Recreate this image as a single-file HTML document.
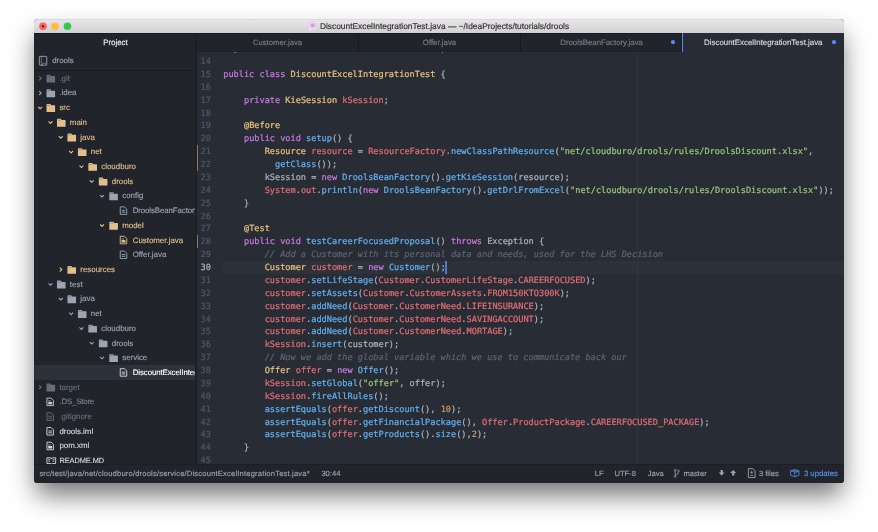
<!DOCTYPE html>
<html lang="en"><head><meta charset="utf-8"><title>DiscountExcelIntegrationTest.java</title>
<style>
html,body{margin:0;padding:0;background:#fff;}
body{width:878px;height:532px;position:relative;overflow:hidden;font-family:"Liberation Sans", sans-serif;text-rendering:geometricPrecision;}
#win{position:absolute;left:34.25px;top:19.0px;width:809.5px;height:463.95px;border-radius:4px 4px 3.5px 3.5px;
  box-shadow:0 14px 26px -2px rgba(0,0,0,.55);background:#282c34;}
#clip{position:absolute;left:0;top:0;width:100%;height:100%;border-radius:4px 4px 3.5px 3.5px;overflow:hidden;}
#abs{position:absolute;left:-34.25px;top:-19.0px;width:878px;height:532px;will-change:transform;}
#abs div,#abs svg{position:absolute;}
#abs div{height:14px;line-height:14px;white-space:pre;}
svg{display:block;overflow:visible;}
#abs .ctr{text-align:center;}
#abs #title{left:34.25px;top:19.0px;width:809.5px;height:14.00px;background:linear-gradient(#dcdadc 0,#dcdadc 1px,#e7e5e7 1px,#d2d0d2 100%);}
#abs .tl{top:22.4px;width:7.6px;height:7.6px;border-radius:50%;}
#abs #work{left:34.25px;top:33.0px;width:809.5px;height:431.00px;background:#181a1f;}
#abs #side{left:34.25px;top:33.6px;width:160.75px;height:430.40px;background:#21252b;}
#abs #sideb{left:195.0px;top:33.6px;width:1.60px;height:430.40px;background:#1c1f25;}
#abs #rootline{left:34.25px;top:70.0px;width:160.75px;height:0.8px;background:#181a1f;}
#abs #treeclip{left:34.25px;top:70.0px;width:161.45px;height:394.00px;overflow:hidden}
#abs #treein{left:-34.25px;top:-70.0px;width:878px;height:532px}
#abs #tabs{left:196.6px;top:33.6px;width:647.15px;height:18.40px;background:#21252b;}
#abs #tabline{left:196.6px;top:51px;width:486.00px;height:1px;background:#1d2026;}
#abs #tact{left:682.6px;top:33.0px;width:161.15px;height:19.00px;background:#282c34;}
#abs .tsep{top:33.6px;height:18.40px;width:0.9px;background:#181a1f;}
#abs .dot{width:3.7px;height:3.7px;border-radius:50%;background:#568af2;top:40.4px;}
#abs #ed{left:196.6px;top:52.0px;width:647.15px;height:412.00px;background:#282c34;overflow:hidden;}
#abs #edin{left:-196.6px;top:-52.0px;width:878px;height:532px;font-family:"DejaVu Sans Mono", "Liberation Mono", monospace;font-size:8.6px;color:#abb2bf;-webkit-text-stroke:.22px currentColor;}
#abs .ln{left:200.55px;height:12.875px;line-height:12.875px;color:#4f5666;}
#abs .ln.cur{color:#abb2bf;}
#abs .cl{left:223.25px;height:12.875px;line-height:12.875px;}
.k{color:#c678dd}.c{color:#e5c07b}.v{color:#e06c75}.f{color:#61afef}.s{color:#98c379}.n{color:#d19a66}.m{color:#5c6370;font-style:italic}
#abs #curline{left:223.1px;width:620.65px;top:260.9px;height:13px;background:#2c313a;}
#abs #cursor{left:444.9px;top:260.9px;width:2.3px;height:13px;background:#4b79da;}
#abs #guide{left:637.2px;top:0;width:0.9px;height:532px;background:#31353e;}
#abs .gm{left:195.8px;width:2.1px;background:#8b7959;}
#abs #status{left:34.25px;top:464.0px;width:809.5px;height:18.95px;background:#21252b;}
#abs #stline{left:34.25px;top:464.0px;width:809.5px;height:1px;background:#1b1e23;}
</style></head><body>
<div id="win"><div id="clip"><div id="abs">
<div id="title"></div>
<svg style="left:34px;top:19px" width="40" height="14" viewBox="0 0 40 14"><circle cx="8.95" cy="7.25" r="3.8" fill="#fc605b"/><circle cx="21" cy="7.25" r="3.8" fill="#fdbc40"/><circle cx="33.45" cy="7.25" r="3.8" fill="#34c84a"/><circle cx="8.95" cy="7.25" r="1.05" fill="#4d0000"/></svg>
<div id="ticon" style="left:309.2px;top:21.8px;width:6.2px;height:9px;border-radius:.8px;background:#e9e8ea;box-shadow:0 0 0 .4px #cfcdd1"></div>
<div style="left:310.1px;top:23px;width:4.6px;height:4.8px;border-radius:50%;background:#e0a2ea"></div>
<div style="left:311.6px;top:24.6px;width:1.6px;height:1.6px;border-radius:50%;background:#b07ab8"></div>
<div style="left:310.6px;top:29.2px;width:3.6px;height:.6px;background:#cfcdd1"></div>
<div style="left:319.9px;top:19px;font-size:8.4px;color:#303030;-webkit-text-stroke:.15px #303030;">DiscountExcelIntegrationTest.java — ~/IdeaProjects/tutorials/drools</div>
<div id="work"></div>
<div id="side"></div>
<div style="left:103.2px;top:36px;font-size:7.9px;color:#d7dae0;-webkit-text-stroke:.3px #d7dae0;">Project</div>
<svg style="left:38px;top:55px" width="11" height="13" viewBox="-0.900 -0.900 11.000 13.000"><path d="M0.45 8.7 V1 Q0.45 0.45 1 0.45 H7.3 Q7.85 0.45 7.85 1 V8.7 Q7.85 9.25 7.3 9.25 H4.5 M1.7 9.25 H1 Q0.45 9.25 0.45 8.7" fill="none" stroke="#9da5b4" stroke-width="0.9"/><path d="M2.5 0.45 V7.4 H7.85" fill="none" stroke="#9da5b4" stroke-width="0.7" opacity=".75"/><path d="M1.9 8.3 V10.2 L3 9.5 L4.1 10.2 V8.3 Z" fill="#9da5b4"/></svg>
<div style="left:52.2px;top:54px;font-size:7.9px;color:#9da5b4;-webkit-text-stroke:.12px #9da5b4;">drools</div>
<div id="rootline"></div>
<div id="treeclip"><div id="treein">
<svg style="left:38px;top:75px" width="5" height="7" viewBox="-0.650 -0.950 5.000 7.000"><path d="M0.55 0.45 L2.5 2.4 L0.55 4.35" fill="none" stroke="#676e7b" stroke-width="1.1"/></svg>
<svg style="left:46px;top:74px" width="11" height="10" viewBox="-0.500 -0.650 11.000 10.000"><path d="M0 0.6 Q0 0 0.6 0 L3.7 0 Q4.2 0 4.3 0.5 L4.5 1.3 L8.1 1.3 Q8.6 1.3 8.6 1.8 L8.6 7.4 Q8.6 7.9 8.1 7.9 L0.5 7.9 Q0 7.9 0 7.4 Z" fill="#676e7b"/><path d="M0.7 1.45 H3.7" stroke="#21252b" stroke-width="0.5" opacity=".6"/></svg>
<div style="left:59.4px;top:72px;font-size:7.9px;color:#676e7b;-webkit-text-stroke:.12px #676e7b;">.git</div>
<svg style="left:38px;top:90px" width="5" height="7" viewBox="-0.650 -0.660 5.000 7.000"><path d="M0.55 0.45 L2.5 2.4 L0.55 4.35" fill="none" stroke="#9da5b4" stroke-width="1.1"/></svg>
<svg style="left:46px;top:89px" width="11" height="10" viewBox="-0.500 -0.360 11.000 10.000"><path d="M0 0.6 Q0 0 0.6 0 L3.7 0 Q4.2 0 4.3 0.5 L4.5 1.3 L8.1 1.3 Q8.6 1.3 8.6 1.8 L8.6 7.4 Q8.6 7.9 8.1 7.9 L0.5 7.9 Q0 7.9 0 7.4 Z" fill="#9da5b4"/><path d="M0.7 1.45 H3.7" stroke="#21252b" stroke-width="0.5" opacity=".6"/></svg>
<div style="left:59.4px;top:86px;font-size:7.9px;color:#9da5b4;-webkit-text-stroke:.12px #9da5b4;">.idea</div>
<svg style="left:37px;top:106px" width="7" height="5" viewBox="-0.800 -0.220 7.000 5.000"><path d="M0.45 0.55 L2.4 2.5 L4.35 0.55" fill="none" stroke="#e2c08d" stroke-width="1.1"/></svg>
<svg style="left:46px;top:104px" width="11" height="9" viewBox="-0.500 -0.070 11.000 9.000"><path d="M0 0.6 Q0 0 0.6 0 L3.7 0 Q4.2 0 4.3 0.5 L4.5 1.3 L8.1 1.3 Q8.6 1.3 8.6 1.8 L8.6 7.4 Q8.6 7.9 8.1 7.9 L0.5 7.9 Q0 7.9 0 7.4 Z" fill="#e2c08d"/><path d="M0.7 1.45 H3.7" stroke="#21252b" stroke-width="0.5" opacity=".6"/></svg>
<div style="left:59.4px;top:101px;font-size:7.9px;color:#e2c08d;-webkit-text-stroke:.12px #e2c08d;">src</div>
<svg style="left:48px;top:120px" width="6" height="6" viewBox="-0.100 -0.930 6.000 6.000"><path d="M0.45 0.55 L2.4 2.5 L4.35 0.55" fill="none" stroke="#e2c08d" stroke-width="1.1"/></svg>
<svg style="left:56px;top:118px" width="11" height="10" viewBox="-0.970 -0.780 11.000 10.000"><path d="M0 0.6 Q0 0 0.6 0 L3.7 0 Q4.2 0 4.3 0.5 L4.5 1.3 L8.1 1.3 Q8.6 1.3 8.6 1.8 L8.6 7.4 Q8.6 7.9 8.1 7.9 L0.5 7.9 Q0 7.9 0 7.4 Z" fill="#e2c08d"/><path d="M0.7 1.45 H3.7" stroke="#21252b" stroke-width="0.5" opacity=".6"/></svg>
<div style="left:69.87px;top:116px;font-size:7.9px;color:#e2c08d;-webkit-text-stroke:.12px #e2c08d;">main</div>
<svg style="left:58px;top:135px" width="7" height="5" viewBox="-0.400 -0.640 7.000 5.000"><path d="M0.45 0.55 L2.4 2.5 L4.35 0.55" fill="none" stroke="#e2c08d" stroke-width="1.1"/></svg>
<svg style="left:67px;top:133px" width="11" height="10" viewBox="-0.440 -0.490 11.000 10.000"><path d="M0 0.6 Q0 0 0.6 0 L3.7 0 Q4.2 0 4.3 0.5 L4.5 1.3 L8.1 1.3 Q8.6 1.3 8.6 1.8 L8.6 7.4 Q8.6 7.9 8.1 7.9 L0.5 7.9 Q0 7.9 0 7.4 Z" fill="#e2c08d"/><path d="M0.7 1.45 H3.7" stroke="#21252b" stroke-width="0.5" opacity=".6"/></svg>
<div style="left:80.34px;top:131px;font-size:7.9px;color:#e2c08d;-webkit-text-stroke:.12px #e2c08d;">java</div>
<svg style="left:68px;top:150px" width="7" height="5" viewBox="-0.700 -0.350 7.000 5.000"><path d="M0.45 0.55 L2.4 2.5 L4.35 0.55" fill="none" stroke="#e2c08d" stroke-width="1.1"/></svg>
<svg style="left:77px;top:148px" width="11" height="10" viewBox="-0.910 -0.200 11.000 10.000"><path d="M0 0.6 Q0 0 0.6 0 L3.7 0 Q4.2 0 4.3 0.5 L4.5 1.3 L8.1 1.3 Q8.6 1.3 8.6 1.8 L8.6 7.4 Q8.6 7.9 8.1 7.9 L0.5 7.9 Q0 7.9 0 7.4 Z" fill="#e2c08d"/><path d="M0.7 1.45 H3.7" stroke="#21252b" stroke-width="0.5" opacity=".6"/></svg>
<div style="left:90.81px;top:145px;font-size:7.9px;color:#e2c08d;-webkit-text-stroke:.12px #e2c08d;">net</div>
<svg style="left:79px;top:165px" width="6" height="5" viewBox="0.000 -0.060 6.000 5.000"><path d="M0.45 0.55 L2.4 2.5 L4.35 0.55" fill="none" stroke="#e2c08d" stroke-width="1.1"/></svg>
<svg style="left:88px;top:162px" width="10" height="10" viewBox="-0.380 -0.910 10.000 10.000"><path d="M0 0.6 Q0 0 0.6 0 L3.7 0 Q4.2 0 4.3 0.5 L4.5 1.3 L8.1 1.3 Q8.6 1.3 8.6 1.8 L8.6 7.4 Q8.6 7.9 8.1 7.9 L0.5 7.9 Q0 7.9 0 7.4 Z" fill="#e2c08d"/><path d="M0.7 1.45 H3.7" stroke="#21252b" stroke-width="0.5" opacity=".6"/></svg>
<div style="left:101.28px;top:160px;font-size:7.9px;color:#e2c08d;-webkit-text-stroke:.12px #e2c08d;">cloudburo</div>
<svg style="left:89px;top:179px" width="7" height="5" viewBox="-0.300 -0.770 7.000 5.000"><path d="M0.45 0.55 L2.4 2.5 L4.35 0.55" fill="none" stroke="#e2c08d" stroke-width="1.1"/></svg>
<svg style="left:98px;top:177px" width="11" height="10" viewBox="-0.850 -0.620 11.000 10.000"><path d="M0 0.6 Q0 0 0.6 0 L3.7 0 Q4.2 0 4.3 0.5 L4.5 1.3 L8.1 1.3 Q8.6 1.3 8.6 1.8 L8.6 7.4 Q8.6 7.9 8.1 7.9 L0.5 7.9 Q0 7.9 0 7.4 Z" fill="#e2c08d"/><path d="M0.7 1.45 H3.7" stroke="#21252b" stroke-width="0.5" opacity=".6"/></svg>
<div style="left:111.75px;top:175px;font-size:7.9px;color:#e2c08d;-webkit-text-stroke:.12px #e2c08d;">drools</div>
<svg style="left:99px;top:194px" width="7" height="5" viewBox="-0.600 -0.480 7.000 5.000"><path d="M0.45 0.55 L2.4 2.5 L4.35 0.55" fill="none" stroke="#9da5b4" stroke-width="1.1"/></svg>
<svg style="left:109px;top:192px" width="10" height="10" viewBox="-0.320 -0.330 10.000 10.000"><path d="M0 0.6 Q0 0 0.6 0 L3.7 0 Q4.2 0 4.3 0.5 L4.5 1.3 L8.1 1.3 Q8.6 1.3 8.6 1.8 L8.6 7.4 Q8.6 7.9 8.1 7.9 L0.5 7.9 Q0 7.9 0 7.4 Z" fill="#9da5b4"/><path d="M0.7 1.45 H3.7" stroke="#21252b" stroke-width="0.5" opacity=".6"/></svg>
<div style="left:122.22px;top:189px;font-size:7.9px;color:#9da5b4;-webkit-text-stroke:.12px #9da5b4;">config</div>
<svg style="left:119px;top:206px" width="10" height="10" viewBox="-0.790 -0.440 10.000 10.000"><path d="M0.45 0.45 L4.7 0.45 L6.95 2.7 L6.95 7.95 L0.45 7.95 Z" fill="none" stroke="#9da5b4" stroke-width="0.9" stroke-linejoin="round"/><path d="M1.9 3.9 H5.5 M1.9 5.7 H5.5" stroke="#9da5b4" stroke-width="0.9"/></svg>
<div style="left:132.69px;top:204px;font-size:7.9px;color:#9da5b4;letter-spacing:-0.11px;-webkit-text-stroke:.12px #9da5b4;">DroolsBeanFactory.java</div>
<svg style="left:99px;top:223px" width="7" height="6" viewBox="-0.600 -0.900 7.000 6.000"><path d="M0.45 0.55 L2.4 2.5 L4.35 0.55" fill="none" stroke="#e2c08d" stroke-width="1.1"/></svg>
<svg style="left:109px;top:221px" width="10" height="10" viewBox="-0.320 -0.750 10.000 10.000"><path d="M0 0.6 Q0 0 0.6 0 L3.7 0 Q4.2 0 4.3 0.5 L4.5 1.3 L8.1 1.3 Q8.6 1.3 8.6 1.8 L8.6 7.4 Q8.6 7.9 8.1 7.9 L0.5 7.9 Q0 7.9 0 7.4 Z" fill="#e2c08d"/><path d="M0.7 1.45 H3.7" stroke="#21252b" stroke-width="0.5" opacity=".6"/></svg>
<div style="left:122.22px;top:219px;font-size:7.9px;color:#e2c08d;-webkit-text-stroke:.12px #e2c08d;">model</div>
<svg style="left:119px;top:235px" width="10" height="11" viewBox="-0.790 -0.860 10.000 11.000"><path d="M0.45 0.45 L4.7 0.45 L6.95 2.7 L6.95 7.95 L0.45 7.95 Z" fill="none" stroke="#e2c08d" stroke-width="0.9" stroke-linejoin="round"/><path d="M1.7 4.2 H5.7 V6.7 H1.7 Z" fill="#e2c08d"/><path d="M1.8 3.1 H4.2" stroke="#e2c08d" stroke-width="0.7"/></svg>
<div style="left:132.69px;top:234px;font-size:7.9px;color:#e2c08d;-webkit-text-stroke:.12px #e2c08d;">Customer.java</div>
<svg style="left:119px;top:250px" width="10" height="10" viewBox="-0.790 -0.570 10.000 10.000"><path d="M0.45 0.45 L4.7 0.45 L6.95 2.7 L6.95 7.95 L0.45 7.95 Z" fill="none" stroke="#9da5b4" stroke-width="0.9" stroke-linejoin="round"/><path d="M1.9 3.9 H5.5 M1.9 5.7 H5.5" stroke="#9da5b4" stroke-width="0.9"/></svg>
<div style="left:132.69px;top:248px;font-size:7.9px;color:#9da5b4;-webkit-text-stroke:.12px #9da5b4;">Offer.java</div>
<svg style="left:59px;top:267px" width="5" height="6" viewBox="-0.250 -0.180 5.000 6.000"><path d="M0.55 0.45 L2.5 2.4 L0.55 4.35" fill="none" stroke="#e2c08d" stroke-width="1.1"/></svg>
<svg style="left:67px;top:265px" width="11" height="10" viewBox="-0.440 -0.880 11.000 10.000"><path d="M0 0.6 Q0 0 0.6 0 L3.7 0 Q4.2 0 4.3 0.5 L4.5 1.3 L8.1 1.3 Q8.6 1.3 8.6 1.8 L8.6 7.4 Q8.6 7.9 8.1 7.9 L0.5 7.9 Q0 7.9 0 7.4 Z" fill="#e2c08d"/><path d="M0.7 1.45 H3.7" stroke="#21252b" stroke-width="0.5" opacity=".6"/></svg>
<div style="left:80.34px;top:263px;font-size:7.9px;color:#e2c08d;-webkit-text-stroke:.12px #e2c08d;">resources</div>
<svg style="left:48px;top:282px" width="6" height="5" viewBox="-0.100 -0.740 6.000 5.000"><path d="M0.45 0.55 L2.4 2.5 L4.35 0.55" fill="none" stroke="#9da5b4" stroke-width="1.1"/></svg>
<svg style="left:56px;top:280px" width="11" height="10" viewBox="-0.970 -0.590 11.000 10.000"><path d="M0 0.6 Q0 0 0.6 0 L3.7 0 Q4.2 0 4.3 0.5 L4.5 1.3 L8.1 1.3 Q8.6 1.3 8.6 1.8 L8.6 7.4 Q8.6 7.9 8.1 7.9 L0.5 7.9 Q0 7.9 0 7.4 Z" fill="#9da5b4"/><path d="M0.7 1.45 H3.7" stroke="#21252b" stroke-width="0.5" opacity=".6"/></svg>
<div style="left:69.87px;top:278px;font-size:7.9px;color:#9da5b4;-webkit-text-stroke:.12px #9da5b4;">test</div>
<svg style="left:58px;top:297px" width="7" height="5" viewBox="-0.400 -0.450 7.000 5.000"><path d="M0.45 0.55 L2.4 2.5 L4.35 0.55" fill="none" stroke="#9da5b4" stroke-width="1.1"/></svg>
<svg style="left:67px;top:295px" width="11" height="10" viewBox="-0.440 -0.300 11.000 10.000"><path d="M0 0.6 Q0 0 0.6 0 L3.7 0 Q4.2 0 4.3 0.5 L4.5 1.3 L8.1 1.3 Q8.6 1.3 8.6 1.8 L8.6 7.4 Q8.6 7.9 8.1 7.9 L0.5 7.9 Q0 7.9 0 7.4 Z" fill="#9da5b4"/><path d="M0.7 1.45 H3.7" stroke="#21252b" stroke-width="0.5" opacity=".6"/></svg>
<div style="left:80.34px;top:292px;font-size:7.9px;color:#9da5b4;-webkit-text-stroke:.12px #9da5b4;">java</div>
<svg style="left:68px;top:312px" width="7" height="5" viewBox="-0.700 -0.160 7.000 5.000"><path d="M0.45 0.55 L2.4 2.5 L4.35 0.55" fill="none" stroke="#9da5b4" stroke-width="1.1"/></svg>
<svg style="left:77px;top:310px" width="11" height="9" viewBox="-0.910 -0.010 11.000 9.000"><path d="M0 0.6 Q0 0 0.6 0 L3.7 0 Q4.2 0 4.3 0.5 L4.5 1.3 L8.1 1.3 Q8.6 1.3 8.6 1.8 L8.6 7.4 Q8.6 7.9 8.1 7.9 L0.5 7.9 Q0 7.9 0 7.4 Z" fill="#9da5b4"/><path d="M0.7 1.45 H3.7" stroke="#21252b" stroke-width="0.5" opacity=".6"/></svg>
<div style="left:90.81px;top:307px;font-size:7.9px;color:#9da5b4;-webkit-text-stroke:.12px #9da5b4;">net</div>
<svg style="left:79px;top:326px" width="6" height="5" viewBox="0.000 -0.870 6.000 5.000"><path d="M0.45 0.55 L2.4 2.5 L4.35 0.55" fill="none" stroke="#9da5b4" stroke-width="1.1"/></svg>
<svg style="left:88px;top:324px" width="10" height="10" viewBox="-0.380 -0.720 10.000 10.000"><path d="M0 0.6 Q0 0 0.6 0 L3.7 0 Q4.2 0 4.3 0.5 L4.5 1.3 L8.1 1.3 Q8.6 1.3 8.6 1.8 L8.6 7.4 Q8.6 7.9 8.1 7.9 L0.5 7.9 Q0 7.9 0 7.4 Z" fill="#9da5b4"/><path d="M0.7 1.45 H3.7" stroke="#21252b" stroke-width="0.5" opacity=".6"/></svg>
<div style="left:101.28px;top:322px;font-size:7.9px;color:#9da5b4;-webkit-text-stroke:.12px #9da5b4;">cloudburo</div>
<svg style="left:89px;top:341px" width="7" height="5" viewBox="-0.300 -0.580 7.000 5.000"><path d="M0.45 0.55 L2.4 2.5 L4.35 0.55" fill="none" stroke="#9da5b4" stroke-width="1.1"/></svg>
<svg style="left:98px;top:339px" width="11" height="10" viewBox="-0.850 -0.430 11.000 10.000"><path d="M0 0.6 Q0 0 0.6 0 L3.7 0 Q4.2 0 4.3 0.5 L4.5 1.3 L8.1 1.3 Q8.6 1.3 8.6 1.8 L8.6 7.4 Q8.6 7.9 8.1 7.9 L0.5 7.9 Q0 7.9 0 7.4 Z" fill="#9da5b4"/><path d="M0.7 1.45 H3.7" stroke="#21252b" stroke-width="0.5" opacity=".6"/></svg>
<div style="left:111.75px;top:337px;font-size:7.9px;color:#9da5b4;-webkit-text-stroke:.12px #9da5b4;">drools</div>
<svg style="left:99px;top:356px" width="7" height="5" viewBox="-0.600 -0.290 7.000 5.000"><path d="M0.45 0.55 L2.4 2.5 L4.35 0.55" fill="none" stroke="#9da5b4" stroke-width="1.1"/></svg>
<svg style="left:109px;top:354px" width="10" height="10" viewBox="-0.320 -0.140 10.000 10.000"><path d="M0 0.6 Q0 0 0.6 0 L3.7 0 Q4.2 0 4.3 0.5 L4.5 1.3 L8.1 1.3 Q8.6 1.3 8.6 1.8 L8.6 7.4 Q8.6 7.9 8.1 7.9 L0.5 7.9 Q0 7.9 0 7.4 Z" fill="#9da5b4"/><path d="M0.7 1.45 H3.7" stroke="#21252b" stroke-width="0.5" opacity=".6"/></svg>
<div style="left:122.22px;top:351px;font-size:7.9px;color:#9da5b4;-webkit-text-stroke:.12px #9da5b4;">service</div>
<div style="left:34.25px;top:364.80px;width:162.35px;height:14.91px;background:#2c313a"></div>
<svg style="left:119px;top:368px" width="10" height="10" viewBox="-0.790 -0.250 10.000 10.000"><path d="M0.45 0.45 L4.7 0.45 L6.95 2.7 L6.95 7.95 L0.45 7.95 Z" fill="none" stroke="#d7dae0" stroke-width="0.9" stroke-linejoin="round"/><path d="M1.9 3.9 H5.5 M1.9 5.7 H5.5" stroke="#d7dae0" stroke-width="0.9"/></svg>
<div style="left:132.69px;top:366px;font-size:7.9px;color:#ffffff;letter-spacing:-0.1px;-webkit-text-stroke:.12px #ffffff;">DiscountExcelIntegrationTest.java</div>
<svg style="left:38px;top:384px" width="5" height="7" viewBox="-0.650 -0.860 5.000 7.000"><path d="M0.55 0.45 L2.5 2.4 L0.55 4.35" fill="none" stroke="#676e7b" stroke-width="1.1"/></svg>
<svg style="left:46px;top:383px" width="11" height="10" viewBox="-0.500 -0.560 11.000 10.000"><path d="M0 0.6 Q0 0 0.6 0 L3.7 0 Q4.2 0 4.3 0.5 L4.5 1.3 L8.1 1.3 Q8.6 1.3 8.6 1.8 L8.6 7.4 Q8.6 7.9 8.1 7.9 L0.5 7.9 Q0 7.9 0 7.4 Z" fill="#676e7b"/><path d="M0.7 1.45 H3.7" stroke="#21252b" stroke-width="0.5" opacity=".6"/></svg>
<div style="left:59.4px;top:381px;font-size:7.9px;color:#676e7b;-webkit-text-stroke:.12px #676e7b;">target</div>
<svg style="left:46px;top:397px" width="9" height="11" viewBox="-0.500 -0.670 9.000 11.000"><path d="M0.45 0.45 L4.7 0.45 L6.95 2.7 L6.95 7.95 L0.45 7.95 Z" fill="none" stroke="#c5c9d1" stroke-width="0.9" stroke-linejoin="round"/><path d="M1.7 4.2 H5.7 V6.7 H1.7 Z" fill="#c5c9d1"/><path d="M1.8 3.1 H4.2" stroke="#c5c9d1" stroke-width="0.7"/></svg>
<div style="left:59.4px;top:395px;font-size:7.9px;color:#7a818e;letter-spacing:-0.2px;-webkit-text-stroke:.12px #7a818e;">.DS_Store</div>
<svg style="left:46px;top:412px" width="9" height="10" viewBox="-0.500 -0.380 9.000 10.000"><path d="M0.45 0.45 L4.7 0.45 L6.95 2.7 L6.95 7.95 L0.45 7.95 Z" fill="none" stroke="#676e7b" stroke-width="0.9" stroke-linejoin="round"/><path d="M1.9 3.9 H5.5 M1.9 5.7 H5.5" stroke="#676e7b" stroke-width="0.9"/></svg>
<div style="left:59.4px;top:410px;font-size:7.9px;color:#676e7b;-webkit-text-stroke:.12px #676e7b;">.gitignore</div>
<svg style="left:46px;top:427px" width="9" height="10" viewBox="-0.500 -0.090 9.000 10.000"><path d="M0.45 0.45 L4.7 0.45 L6.95 2.7 L6.95 7.95 L0.45 7.95 Z" fill="none" stroke="#d7dae0" stroke-width="0.9" stroke-linejoin="round"/><path d="M1.9 3.9 H5.5 M1.9 5.7 H5.5" stroke="#d7dae0" stroke-width="0.9"/></svg>
<div style="left:59.4px;top:425px;font-size:7.9px;color:#d7dae0;-webkit-text-stroke:.12px #d7dae0;">drools.iml</div>
<svg style="left:46px;top:441px" width="9" height="11" viewBox="-0.500 -0.800 9.000 11.000"><path d="M0.45 0.45 L4.7 0.45 L6.95 2.7 L6.95 7.95 L0.45 7.95 Z" fill="none" stroke="#d7dae0" stroke-width="0.9" stroke-linejoin="round"/><path d="M1.7 4.2 H5.7 V6.7 H1.7 Z" fill="#d7dae0"/><path d="M1.8 3.1 H4.2" stroke="#d7dae0" stroke-width="0.7"/></svg>
<div style="left:59.4px;top:439px;font-size:7.9px;color:#d7dae0;-webkit-text-stroke:.12px #d7dae0;">pom.xml</div>
<svg style="left:46px;top:457px" width="12" height="9" viewBox="-0.500 -0.210 12.000 9.000"><path d="M0.45 0.6 H3.6 Q4.8 0.6 4.8 1.6 Q4.8 0.6 6 0.6 H9.15 V6.3 H6 Q4.8 6.3 4.8 7.2 Q4.8 6.3 3.6 6.3 H0.45 Z" fill="none" stroke="#d7dae0" stroke-width="0.9"/><path d="M1.7 2.4 H3.5 M1.7 4 H3.5 M6.1 2.4 H7.9 M6.1 4 H7.9" stroke="#d7dae0" stroke-width="0.8"/></svg>
<div style="left:59.4px;top:454px;font-size:7.4px;color:#d7dae0;letter-spacing:-0.05px;-webkit-text-stroke:.12px #d7dae0;">README.MD</div>
</div></div>
<div id="sideb"></div>
<div id="tabs"></div>
<div id="tabline"></div>
<div id="tact"></div>
<div class="ctr" style="left:177.50px;width:200px;top:36px;font-size:7.68px;color:#757c89;-webkit-text-stroke:.15px #757c89">Customer.java</div>
<div class="ctr" style="left:339.50px;width:200px;top:36px;font-size:7.85px;color:#757c89;-webkit-text-stroke:.15px #757c89">Offer.java</div>
<div class="ctr" style="left:501.60px;width:200px;top:36px;font-size:7.8px;color:#757c89;-webkit-text-stroke:.15px #757c89">DroolsBeanFactory.java</div>
<div class="ctr" style="left:663.30px;width:200px;top:36px;font-size:7.9px;color:#d7dae0;-webkit-text-stroke:.15px #d7dae0">DiscountExcelIntegrationTest.java</div>
<div class="tsep" style="left:357.95px"></div>
<div class="tsep" style="left:520.15px"></div>
<div class="tsep" style="left:680.8px;width:1.1px"></div>
<div class="tsep" style="left:681.9px;width:1.1px;top:33.0px;height:18.70px;background:#528bff"></div>
<div class="dot" style="left:670.95px"></div>
<div class="dot" style="left:832.35px"></div>
<div id="ed"><div id="edin">
<div id="curline"></div>
<div id="guide"></div>
<div class="gm" style="top:145.03px;height:25.75px"></div>
<div class="gm" style="top:235.15px;height:12.88px"></div>
<div class="ln" style="top:56px">14</div>
<div class="ln" style="top:69px">15</div>
<div class="cl" style="top:69px"><span class="k">public class</span> <span class="c">DiscountExcelIntegrationTest</span> {</div>
<div class="ln" style="top:82px">16</div>
<div class="ln" style="top:95px">17</div>
<div class="cl" style="top:95px">    <span class="k">private</span> <span class="c">KieSession</span> <span class="v">kSession</span>;</div>
<div class="ln" style="top:108px">18</div>
<div class="ln" style="top:120px">19</div>
<div class="cl" style="top:120px">    <span class="c">@Before</span></div>
<div class="ln" style="top:133px">20</div>
<div class="cl" style="top:133px">    <span class="k">public void</span> <span class="f">setup</span>() {</div>
<div class="ln" style="top:146px">21</div>
<div class="cl" style="top:146px">        <span class="c">Resource</span> <span class="v">resource</span> = <span class="v">ResourceFactory</span>.<span class="f">newClassPathResource</span>(<span class="s">"net/cloudburo/drools/rules/DroolsDiscount.xlsx"</span>,</div>
<div class="ln" style="top:159px">22</div>
<div class="cl" style="top:159px">          <span class="f">getClass</span>());</div>
<div class="ln" style="top:172px">23</div>
<div class="cl" style="top:172px">        kSession = <span class="k">new</span> <span class="f">DroolsBeanFactory</span>().<span class="f">getKieSession</span>(resource);</div>
<div class="ln" style="top:185px">24</div>
<div class="cl" style="top:185px">        <span class="v">System</span>.<span class="v">out</span>.<span class="f">println</span>(<span class="k">new</span> <span class="f">DroolsBeanFactory</span>().<span class="f">getDrlFromExcel</span>(<span class="s">"net/cloudburo/drools/rules/DroolsDiscount.xlsx"</span>));</div>
<div class="ln" style="top:198px">25</div>
<div class="cl" style="top:198px">    }</div>
<div class="ln" style="top:211px">26</div>
<div class="ln" style="top:223px">27</div>
<div class="cl" style="top:223px">    <span class="c">@Test</span></div>
<div class="ln" style="top:236px">28</div>
<div class="cl" style="top:236px">    <span class="k">public void</span> <span class="f">testCareerFocusedProposal</span>() <span class="k">throws</span> Exception {</div>
<div class="ln" style="top:249px">29</div>
<div class="cl" style="top:249px">        <span class="m">// Add a Customer with its personal data and needs, used for the LHS Decision</span></div>
<div class="ln cur" style="top:262px">30</div>
<div class="cl" style="top:262px">        <span class="c">Customer</span> <span class="v">customer</span> = <span class="k">new</span> <span class="f">Customer</span>();</div>
<div class="ln" style="top:275px">31</div>
<div class="cl" style="top:275px">        <span class="v">customer</span>.<span class="f">setLifeStage</span>(<span class="v">Customer</span>.<span class="v">CustomerLifeStage</span>.<span class="v">CAREERFOCUSED</span>);</div>
<div class="ln" style="top:288px">32</div>
<div class="cl" style="top:288px">        <span class="v">customer</span>.<span class="f">setAssets</span>(<span class="v">Customer</span>.<span class="v">CustomerAssets</span>.<span class="v">FROM150KTO300K</span>);</div>
<div class="ln" style="top:301px">33</div>
<div class="cl" style="top:301px">        <span class="v">customer</span>.<span class="f">addNeed</span>(<span class="v">Customer</span>.<span class="v">CustomerNeed</span>.<span class="v">LIFEINSURANCE</span>);</div>
<div class="ln" style="top:314px">34</div>
<div class="cl" style="top:314px">        <span class="v">customer</span>.<span class="f">addNeed</span>(<span class="v">Customer</span>.<span class="v">CustomerNeed</span>.<span class="v">SAVINGACCOUNT</span>);</div>
<div class="ln" style="top:326px">35</div>
<div class="cl" style="top:326px">        <span class="v">customer</span>.<span class="f">addNeed</span>(<span class="v">Customer</span>.<span class="v">CustomerNeed</span>.<span class="v">MORTAGE</span>);</div>
<div class="ln" style="top:339px">36</div>
<div class="cl" style="top:339px">        <span class="v">kSession</span>.<span class="f">insert</span>(customer);</div>
<div class="ln" style="top:352px">37</div>
<div class="cl" style="top:352px">        <span class="m">// Now we add the global variable which we use to communicate back our</span></div>
<div class="ln" style="top:365px">38</div>
<div class="cl" style="top:365px">        <span class="c">Offer</span> <span class="v">offer</span> = <span class="k">new</span> <span class="f">Offer</span>();</div>
<div class="ln" style="top:378px">39</div>
<div class="cl" style="top:378px">        <span class="v">kSession</span>.<span class="f">setGlobal</span>(<span class="s">"offer"</span>, offer);</div>
<div class="ln" style="top:391px">40</div>
<div class="cl" style="top:391px">        <span class="v">kSession</span>.<span class="f">fireAllRules</span>();</div>
<div class="ln" style="top:404px">41</div>
<div class="cl" style="top:404px">        <span class="f">assertEquals</span>(<span class="v">offer</span>.<span class="f">getDiscount</span>(), <span class="n">10</span>);</div>
<div class="ln" style="top:417px">42</div>
<div class="cl" style="top:417px">        <span class="f">assertEquals</span>(<span class="v">offer</span>.<span class="f">getFinancialPackage</span>(), <span class="v">Offer</span>.<span class="v">ProductPackage</span>.<span class="v">CAREERFOCUSED_PACKAGE</span>);</div>
<div class="ln" style="top:429px">43</div>
<div class="cl" style="top:429px">        <span class="f">assertEquals</span>(<span class="v">offer</span>.<span class="f">getProducts</span>().<span class="f">size</span>(),<span class="n">2</span>);</div>
<div class="ln" style="top:442px">44</div>
<div class="cl" style="top:442px">    }</div>
<div class="ln" style="top:455px">45</div>
<div id="cursor"></div>
</div></div>
<div style="left:234.1px;top:51.5px;width:1.6px;height:1.4px;border-radius:.5px;background:#c678dd;opacity:.7"></div>
<div style="left:442.2px;top:51.5px;width:1.2px;height:1.1px;border-radius:.5px;background:#abb2bf"></div>
<div id="status"></div><div id="stline"></div>
<div style="left:39.4px;top:467px;font-size:7.6px;color:#9da5b4;letter-spacing:0.18px;-webkit-text-stroke:.12px #9da5b4;">src/test/java/net/cloudburo/drools/service/DiscountExcelIntegrationTest.java*</div>
<div style="left:321.4px;top:467px;font-size:7.6px;color:#9da5b4;-webkit-text-stroke:.12px #9da5b4;">30:44</div>
<div style="left:594.8px;top:467px;font-size:7.6px;color:#9da5b4;-webkit-text-stroke:.12px #9da5b4;">LF</div>
<div style="left:614.5px;top:467px;font-size:7.6px;color:#9da5b4;-webkit-text-stroke:.12px #9da5b4;">UTF-8</div>
<div style="left:647.7px;top:467px;font-size:7.6px;color:#9da5b4;-webkit-text-stroke:.12px #9da5b4;">Java</div>
<svg style="left:673px;top:468px" width="8" height="11" viewBox="-0.900 -0.900 8.000 11.000"><path d="M1.3 1.6 V7.4 M1.3 6 Q4.6 5.6 4.6 2.8" fill="none" stroke="#9da5b4" stroke-width="0.8"/><circle cx="1.3" cy="1.3" r="0.9" fill="none" stroke="#9da5b4" stroke-width="0.6"/><circle cx="4.6" cy="2" r="0.9" fill="none" stroke="#9da5b4" stroke-width="0.6"/><circle cx="1.3" cy="7.6" r="0.9" fill="none" stroke="#9da5b4" stroke-width="0.6"/></svg>
<div style="left:683.5px;top:467px;font-size:7.6px;color:#9da5b4;-webkit-text-stroke:.12px #9da5b4;">master</div>
<svg style="left:718px;top:470px" width="8" height="7" viewBox="-0.800 -0.100 8.000 7.000"><path d="M1.8 0 H4 V2.4 H5.8 L2.9 5.4 L0 2.4 H1.8 Z" fill="#9da5b4"/></svg>
<svg style="left:730px;top:470px" width="8" height="7" viewBox="-0.300 -0.100 8.000 7.000"><path d="M1.8 5.4 H4 V3 H5.8 L2.9 0 L0 3 H1.8 Z" fill="#9da5b4"/></svg>
<svg style="left:747px;top:468px" width="10" height="11" viewBox="-0.900 -0.200 10.000 11.000"><path d="M0.45 0.45 H5 L7.15 2.6 V9.35 H0.45 Z" fill="none" stroke="#9da5b4" stroke-width="0.9" stroke-linejoin="round"/><path d="M3.8 2.7 V5.5 M2.4 4.1 H5.2 M2.4 7.2 H5.2" stroke="#9da5b4" stroke-width="0.8"/></svg>
<div style="left:758.9px;top:467px;font-size:7.6px;color:#9da5b4;-webkit-text-stroke:.12px #9da5b4;">3 files</div>
<svg style="left:789px;top:469px" width="12" height="10" viewBox="-0.800 0.000 12.000 10.617"><path d="M0.5 1.9 L5 0.5 L9.5 1.9 V6.7 L5 8.1 L0.5 6.7 Z M0.5 1.9 L5 3.3 L9.5 1.9 M5 3.3 V8.1 M2.7 1.2 L7.2 2.6 V4.4" fill="none" stroke="#5a94ee" stroke-width="0.8" stroke-linejoin="round"/></svg>
<div style="left:803.9px;top:467px;font-size:7.75px;color:#5a94ee;-webkit-text-stroke:.12px #5a94ee;">3 updates</div>
</div></div></div>
</body></html>
